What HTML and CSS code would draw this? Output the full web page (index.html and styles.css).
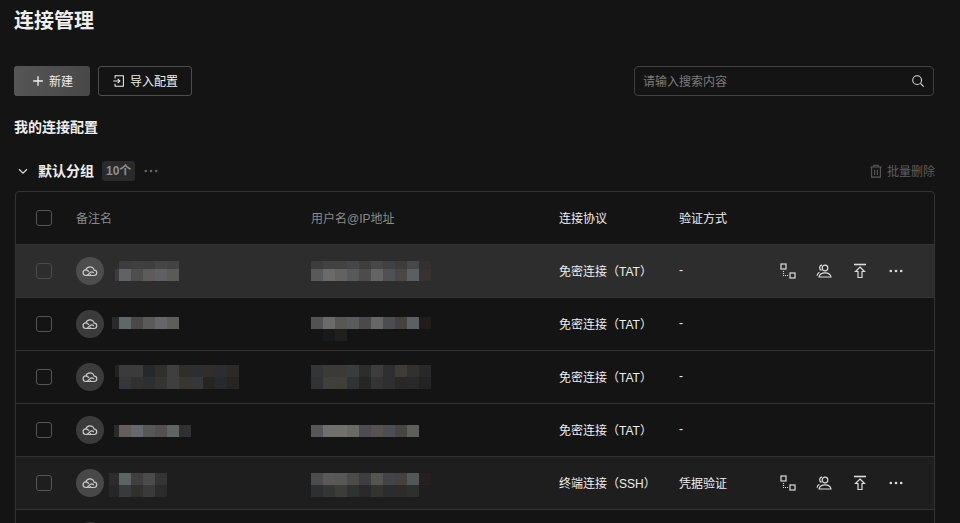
FILE: index.html
```html
<!DOCTYPE html>
<html lang="zh-CN">
<head>
  <meta charset="UTF-8" />
  <title>连接管理</title>
  <link rel="stylesheet" href="styles.css">
</head>
<body>
  <svg class="defs" width="0" height="0">
    <symbol id="i-cloud" viewBox="0 0 16 16">
      <path d="M4 12.500a2.800 2.800 0 0 1-.2-5.600 4.300 4.300 0 0 1 8.300.2 2.700 2.700 0 0 1-.1 5.400z" />
      <path d="M4 12.500c2.600 0 3.400-3.700 5.600-3.700.8 0 1.500.4 2.200 1.200M3.800 6.900c1.300 0 2.200.7 3.200 2M7.800 11.300c.7.800 1.400 1.200 2.400 1.200" />
    </symbol>
    <symbol id="i-link" viewBox="0 0 16 16">
      <rect x="1" y="1" width="5" height="5" />
      <rect x="10" y="10" width="5" height="5" />
      <path d="M3.500 8v4.500H8" stroke-dasharray="1 1" />
    </symbol>
    <symbol id="i-user" viewBox="0 0 16 16">
      <circle cx="9" cy="5" r="2.800" />
      <path d="M3 14c.4-2.600 2.600-4.200 6-4.200s5.600 1.600 6 4.200z" />
      <path d="M5.600 7.400a2.900 2.900 0 0 1 .4-5.600M3.400 9.200C2 10 1.200 11.200 1 12.800" />
    </symbol>
    <symbol id="i-up" viewBox="0 0 16 16">
      <path d="M2 1.500h12" stroke-width="1.600" />
      <path d="M8 4l4.500 4.500h-2.500v6H6v-6H3.500z" />
    </symbol>
    <symbol id="i-more" viewBox="0 0 16 16">
      <circle class="solid" cx="2.800" cy="8" r="1.300" />
      <circle class="solid" cx="8" cy="8" r="1.300" />
      <circle class="solid" cx="13.200" cy="8" r="1.300" />
    </symbol>
  </svg>

  <h1 class="title">连接管理</h1>

  <div class="toolbar">
    <button class="btn btn-primary">
      <svg class="icon" viewBox="0 0 16 16"><path d="M8 2.500v11M2.500 8h11" stroke-width="1.500" /></svg>
      <span class="label">新建</span>
    </button>
    <button class="btn">
      <svg class="icon" viewBox="0 0 16 16"><path d="M3.500 5V2h9.500v12H3.500v-3M1.500 8h7M6.500 5.500L9 8l-2.500 2.500" /></svg>
      <span class="label">导入配置</span>
    </button>
    <div class="search">
      <span class="label search-text">请输入搜索内容</span>
      <svg class="icon" viewBox="0 0 16 16"><circle cx="7" cy="7" r="5" /><path d="M10.800 10.800l3.700 3.700" /></svg>
    </div>
  </div>

  <h2 class="section">我的连接配置</h2>

  <div class="group">
    <svg class="chevron" viewBox="0 0 16 16"><path d="M3.500 6l4.500 4.500L12.500 6" /></svg>
    <span class="label group-name">默认分组</span>
    <span class="count">10个</span>
    <svg class="group-more" viewBox="0 0 16 16"><use href="#i-more" /></svg>
    <span class="batch">
      <svg class="icon" viewBox="0 0 16 16"><path d="M1.500 3.500h13M5.500 3.500v-2h5v2M3 3.500V15h10V3.500M6.500 6.500v6M9.500 6.500v6" /></svg>
      <span class="label">批量删除</span>
    </span>
  </div>

  <div class="table">
    <div class="row row-head">
      <span class="check"></span>
      <span class="label muted">备注名</span>
      <span class="label muted">用户名@IP地址</span>
      <span class="label">连接协议</span>
      <span class="label">验证方式</span>
    </div>

    <div class="row row-hover">
      <span class="check"></span>
      <div class="name">
        <span class="avatar"><svg viewBox="0 0 16 16"><use href="#i-cloud" /></svg></span>
        <svg class="mosaic" viewBox="0 0 207 52">
          <rect class="c" x="11" y="24" height="8" width="4" fill="#3c3c3c" />
          <rect class="c t" x="15" y="16" fill="#3d3d3d" /><rect class="c t" x="27" y="16" fill="#3f3f3f" /><rect class="c t" x="39" y="16" fill="#3e3e3e" /><rect class="c t" x="51" y="16" fill="#454545" /><rect class="c t" x="63" y="16" fill="#434343" />
          <rect class="c" x="15" y="24" fill="#5e6366" /><rect class="c" x="27" y="24" fill="#4e4e4e" /><rect class="c" x="39" y="24" fill="#5e5c59" /><rect class="c" x="51" y="24" fill="#5f6063" /><rect class="c" x="63" y="24" fill="#5a5a56" />
        </svg>
      </div>
      <svg class="mosaic" viewBox="0 0 248 52">
        <rect class="c t" x="0" y="16" fill="#3c3c3c" /><rect class="c t" x="12" y="16" fill="#424242" /><rect class="c t" x="24" y="16" fill="#424240" /><rect class="c t" x="36" y="16" fill="#444749" /><rect class="c t" x="48" y="16" fill="#3e3e3e" /><rect class="c t" x="60" y="16" fill="#474747" /><rect class="c t" x="72" y="16" fill="#404143" /><rect class="c t" x="84" y="16" fill="#3e3c3b" /><rect class="c t" x="96" y="16" fill="#45484a" /><rect class="c t" x="108" y="16" width="10" fill="#333130" />
        <rect class="c" x="0" y="24" fill="#58595b" /><rect class="c" x="12" y="24" fill="#6a6a68" /><rect class="c" x="24" y="24" fill="#636260" /><rect class="c" x="36" y="24" fill="#54595b" /><rect class="c" x="48" y="24" fill="#4c4c4c" /><rect class="c" x="60" y="24" fill="#646462" /><rect class="c" x="72" y="24" fill="#505155" /><rect class="c" x="84" y="24" fill="#4a4845" /><rect class="c" x="96" y="24" fill="#5a5f61" /><rect class="c" x="108" y="24" width="10" fill="#38332f" />
      </svg>
      <span class="label">免密连接（TAT）</span>
      <span class="label">-</span>
      <div class="actions">
        <svg viewBox="0 0 16 16"><use href="#i-link" /></svg>
        <svg viewBox="0 0 16 16"><use href="#i-user" /></svg>
        <svg viewBox="0 0 16 16"><use href="#i-up" /></svg>
        <svg viewBox="0 0 16 16"><use href="#i-more" /></svg>
      </div>
    </div>

    <div class="row">
      <span class="check"></span>
      <div class="name">
        <span class="avatar"><svg viewBox="0 0 16 16"><use href="#i-cloud" /></svg></span>
        <svg class="mosaic" viewBox="0 0 207 52">
          <rect class="c" x="8" y="19" width="7" fill="#2a2a2a" />
          <rect class="c" x="15" y="19" fill="#5e6868" /><rect class="c" x="27" y="19" fill="#4b4845" /><rect class="c" x="39" y="19" fill="#5a5a57" /><rect class="c" x="51" y="19" fill="#65656a" /><rect class="c" x="63" y="19" fill="#5e5e58" />
        </svg>
      </div>
      <svg class="mosaic" viewBox="0 0 248 52">
        <rect class="c" x="0" y="19" fill="#505254" /><rect class="c" x="12" y="19" fill="#6a6a68" /><rect class="c" x="24" y="19" fill="#585753" /><rect class="c" x="36" y="19" fill="#575c5e" /><rect class="c" x="48" y="19" fill="#4a4a4a" /><rect class="c" x="60" y="19" fill="#666664" /><rect class="c" x="72" y="19" fill="#4c4d50" /><rect class="c" x="84" y="19" fill="#45413c" /><rect class="c" x="96" y="19" fill="#5a6063" /><rect class="c" x="108" y="19" width="8" fill="#201c19" />
        <rect class="c" x="12" y="31" fill="#171a1a" /><rect class="c" x="24" y="31" fill="#1f1f1c" />
      </svg>
      <span class="label">免密连接（TAT）</span>
      <span class="label">-</span>
    </div>

    <div class="row">
      <span class="check"></span>
      <div class="name">
        <span class="avatar"><svg viewBox="0 0 16 16"><use href="#i-cloud" /></svg></span>
        <svg class="mosaic" viewBox="0 0 207 52">
          <rect class="c" x="11" y="14" height="24" width="4" fill="#222" />
          <rect class="c" x="15" y="14" fill="#3b3b3b" /><rect class="c" x="27" y="14" fill="#3b3b3b" /><rect class="c" x="39" y="14" fill="#26282a" /><rect class="c" x="51" y="14" fill="#312f2c" /><rect class="c" x="63" y="14" fill="#3f3f3d" /><rect class="c" x="75" y="14" fill="#2f2e2a" /><rect class="c" x="87" y="14" fill="#2c2e31" /><rect class="c" x="99" y="14" fill="#302d2a" /><rect class="c" x="111" y="14" fill="#2b2d31" /><rect class="c" x="123" y="14" fill="#2c2a26" />
          <rect class="c" x="15" y="26" fill="#33373b" /><rect class="c" x="27" y="26" fill="#33312c" /><rect class="c" x="39" y="26" fill="#2d3033" /><rect class="c" x="51" y="26" fill="#353434" /><rect class="c" x="63" y="26" fill="#3f3f3d" /><rect class="c" x="75" y="26" fill="#38362f" /><rect class="c" x="87" y="26" fill="#35383b" /><rect class="c" x="99" y="26" fill="#252623" /><rect class="c" x="111" y="26" fill="#272a2c" /><rect class="c" x="123" y="26" fill="#262521" />
        </svg>
      </div>
      <svg class="mosaic" viewBox="0 0 248 52">
        <rect class="c" x="0" y="14" fill="#333537" /><rect class="c" x="12" y="14" fill="#3a3a38" /><rect class="c" x="24" y="14" fill="#3b3a36" /><rect class="c" x="36" y="14" fill="#3a3d3d" /><rect class="c" x="48" y="14" fill="#2c2e2d" /><rect class="c" x="60" y="14" fill="#3d3d3b" /><rect class="c" x="72" y="14" fill="#2f2f31" /><rect class="c" x="84" y="14" fill="#3f3c36" /><rect class="c" x="96" y="14" fill="#313130" /><rect class="c" x="108" y="14" fill="#282828" />
        <rect class="c" x="0" y="26" fill="#303234" /><rect class="c" x="12" y="26" fill="#3f403c" /><rect class="c" x="24" y="26" fill="#3f3f38" /><rect class="c" x="36" y="26" fill="#2f3333" /><rect class="c" x="48" y="26" fill="#262725" /><rect class="c" x="60" y="26" fill="#343432" /><rect class="c" x="72" y="26" fill="#2f2f30" /><rect class="c" x="84" y="26" fill="#2a2826" /><rect class="c" x="96" y="26" fill="#2a2929" /><rect class="c" x="108" y="26" fill="#232323" />
      </svg>
      <span class="label">免密连接（TAT）</span>
      <span class="label">-</span>
    </div>

    <div class="row">
      <span class="check"></span>
      <div class="name">
        <span class="avatar"><svg viewBox="0 0 16 16"><use href="#i-cloud" /></svg></span>
        <svg class="mosaic" viewBox="0 0 207 52">
          <rect class="c" x="10" y="21" width="5" fill="#2a2a2a" />
          <rect class="c" x="15" y="21" fill="#655e5a" /><rect class="c" x="27" y="21" fill="#656870" /><rect class="c" x="39" y="21" fill="#555855" /><rect class="c" x="51" y="21" fill="#55504e" /><rect class="c" x="63" y="21" fill="#5e6664" /><rect class="c" x="75" y="21" fill="#2f3033" />
        </svg>
      </div>
      <svg class="mosaic" viewBox="0 0 248 52">
        <rect class="c" x="0" y="21" fill="#55565a" /><rect class="c" x="12" y="21" fill="#6f706c" /><rect class="c" x="24" y="21" fill="#71716a" /><rect class="c" x="36" y="21" fill="#6a6a64" /><rect class="c" x="48" y="21" fill="#4c4d52" /><rect class="c" x="60" y="21" fill="#57524f" /><rect class="c" x="72" y="21" fill="#4d4e55" /><rect class="c" x="84" y="21" fill="#48463f" /><rect class="c" x="96" y="21" fill="#5e5e5a" />
      </svg>
      <span class="label">免密连接（TAT）</span>
      <span class="label">-</span>
    </div>

    <div class="row row-soft">
      <span class="check"></span>
      <div class="name">
        <span class="avatar"><svg viewBox="0 0 16 16"><use href="#i-cloud" /></svg></span>
        <svg class="mosaic" viewBox="0 0 207 52">
          <rect class="c" x="5" y="16" width="10" fill="#2c2c2c" /><rect class="c" x="5" y="28" width="10" fill="#272727" />
          <rect class="c" x="15" y="16" fill="#5a6465" /><rect class="c" x="27" y="16" fill="#3f3f3f" /><rect class="c" x="39" y="16" fill="#4d4a47" /><rect class="c" x="51" y="16" fill="#343434" />
          <rect class="c" x="15" y="28" fill="#363b3b" /><rect class="c" x="27" y="28" fill="#32302e" /><rect class="c" x="39" y="28" fill="#3a3a3a" /><rect class="c" x="51" y="28" fill="#2b2b2b" />
        </svg>
      </div>
      <svg class="mosaic" viewBox="0 0 248 52">
        <rect class="c" x="0" y="16" fill="#4b4c4f" /><rect class="c" x="12" y="16" fill="#5a5956" /><rect class="c" x="24" y="16" fill="#575755" /><rect class="c" x="36" y="16" fill="#4d4b47" /><rect class="c" x="48" y="16" fill="#3d3e40" /><rect class="c" x="60" y="16" fill="#555550" /><rect class="c" x="72" y="16" fill="#434449" /><rect class="c" x="84" y="16" fill="#45413d" /><rect class="c" x="96" y="16" fill="#51585a" /><rect class="c" x="108" y="16" width="7" fill="#261f1e" />
        <rect class="c" x="0" y="28" fill="#2e2f31" /><rect class="c" x="12" y="28" fill="#343636" /><rect class="c" x="24" y="28" fill="#3c3c38" /><rect class="c" x="36" y="28" fill="#2e3231" /><rect class="c" x="48" y="28" fill="#2a2a2a" /><rect class="c" x="60" y="28" fill="#353330" /><rect class="c" x="72" y="28" fill="#2a2d2e" /><rect class="c" x="84" y="28" fill="#2e2c2a" /><rect class="c" x="96" y="28" fill="#2e2f2f" />
      </svg>
      <span class="label">终端连接（SSH）</span>
      <span class="label">凭据验证</span>
      <div class="actions">
        <svg viewBox="0 0 16 16"><use href="#i-link" /></svg>
        <svg viewBox="0 0 16 16"><use href="#i-user" /></svg>
        <svg viewBox="0 0 16 16"><use href="#i-up" /></svg>
        <svg viewBox="0 0 16 16"><use href="#i-more" /></svg>
      </div>
    </div>

    <div class="row">
      <span class="check"></span>
      <div class="name">
        <span class="avatar"><svg viewBox="0 0 16 16"><use href="#i-cloud" /></svg></span>
      </div>
    </div>
  </div>
</body>
</html>
```

FILE: styles.css
```css
html, body {
  height: 523px;
  overflow: hidden;
}
body {
  margin: 0;
  padding: 0 26px 0 14px;
  background: #141414;
  color: #eee;
  font-family: "Liberation Sans", "Noto Sans CJK SC", sans-serif;
  font-size: 12px;
}
.defs {
  position: absolute;
}
svg {
  fill: none;
  stroke: currentColor;
  stroke-width: 1.2;
  flex: none;
}
.solid {
  fill: currentColor;
  stroke: none;
}
.icon {
  width: 14px;
  height: 14px;
}
/* cjk glyphs sit a bit low in the line box */
.label {
  padding-bottom: 2px;
}

.title {
  margin: 0;
  padding-top: 7px;
  height: 66px;
  box-sizing: border-box;
  font-size: 20px;
  line-height: 28px;
  font-weight: 700;
  color: #eee;
}

.toolbar {
  display: flex;
  align-items: center;
  gap: 8px;
  height: 30px;
}
.btn {
  display: flex;
  align-items: center;
  justify-content: center;
  gap: 4px;
  height: 30px;
  padding: 0;
  width: 94px;
  border: 1px solid #4d4d4d;
  border-radius: 3px;
  background: none;
  color: #eee;
  font: inherit;
}
.btn-primary {
  width: 76px;
  border: 0;
  background: linear-gradient(90deg, #555, #484848);
}
.search {
  display: flex;
  align-items: center;
  justify-content: space-between;
  box-sizing: border-box;
  width: 300px;
  height: 30px;
  margin-left: auto;
  padding: 0 8px;
  border: 1px solid #404040;
  border-radius: 4px;
  color: #ddd;
}
.search-text {
  color: #7c7c7c;
}

.section {
  margin: 21px 0 0;
  font-size: 14px;
  line-height: 20px;
  font-weight: 700;
  color: #eee;
}

.group {
  display: flex;
  align-items: center;
  height: 24px;
  margin-top: 22px;
  padding-left: 2px;
  width: 921px;
  box-sizing: border-box;
}
.chevron {
  width: 14px;
  height: 14px;
  margin-right: 8px;
  stroke-width: 1.4;
  color: #ddd;
}
.group-name {
  font-size: 14px;
  font-weight: 700;
}
.count {
  margin-left: 8px;
  padding: 0 4px;
  height: 20px;
  line-height: 20px;
  border-radius: 3px;
  background: #2a2a2a;
  color: #8f8f8f;
  font-size: 12px;
  font-weight: 700;
}
.group-more {
  width: 16px;
  height: 16px;
  margin-left: 8px;
  color: #666;
}
.batch {
  display: flex;
  align-items: center;
  gap: 4px;
  margin-left: auto;
  color: #5c5c5c;
}

.table {
  box-sizing: border-box;
  width: 920px;
  margin: 8px 0 0 1px;
  border: 1px solid #333;
  border-radius: 4px 4px 0 0;
}
.row {
  display: grid;
  grid-template-columns: 60px 235px 248px 120px 101px 1fr;
  align-items: center;
  height: 53px;
  box-sizing: border-box;
  border-bottom: 1px solid #333;
  color: #eee;
}
.row-hover {
  background: #2d2d2d;
}
.row-soft {
  background: #1e1e1e;
}
.muted {
  color: #8a8a8a;
}
.check {
  box-sizing: border-box;
  width: 16px;
  height: 16px;
  margin-left: 20px;
  border: 1px solid #555;
  border-radius: 3px;
}
.row-hover .check {
  border-color: #4a4a4a;
}

.name {
  display: flex;
  align-items: center;
  height: 52px;
}
.avatar {
  display: flex;
  align-items: center;
  justify-content: center;
  width: 28px;
  height: 28px;
  flex: none;
  border-radius: 50%;
  background: #3b3b3b;
  color: #c8c8c8;
}
.row-hover .avatar {
  background: #4d4d4d;
}
.row-soft .avatar {
  background: #484848;
}
.avatar svg {
  width: 16px;
  height: 16px;
}

.mosaic {
  display: block;
  height: 52px;
  stroke: none;
  shape-rendering: crispEdges;
}
.name .mosaic {
  width: 207px;
}
.row > .mosaic {
  width: 248px;
}
.c {
  width: 12px;
  height: 12px;
}
.t {
  height: 8px;
}

.actions {
  display: flex;
  gap: 20px;
  color: #ddd;
}
.actions svg {
  width: 16px;
  height: 16px;
}
```
